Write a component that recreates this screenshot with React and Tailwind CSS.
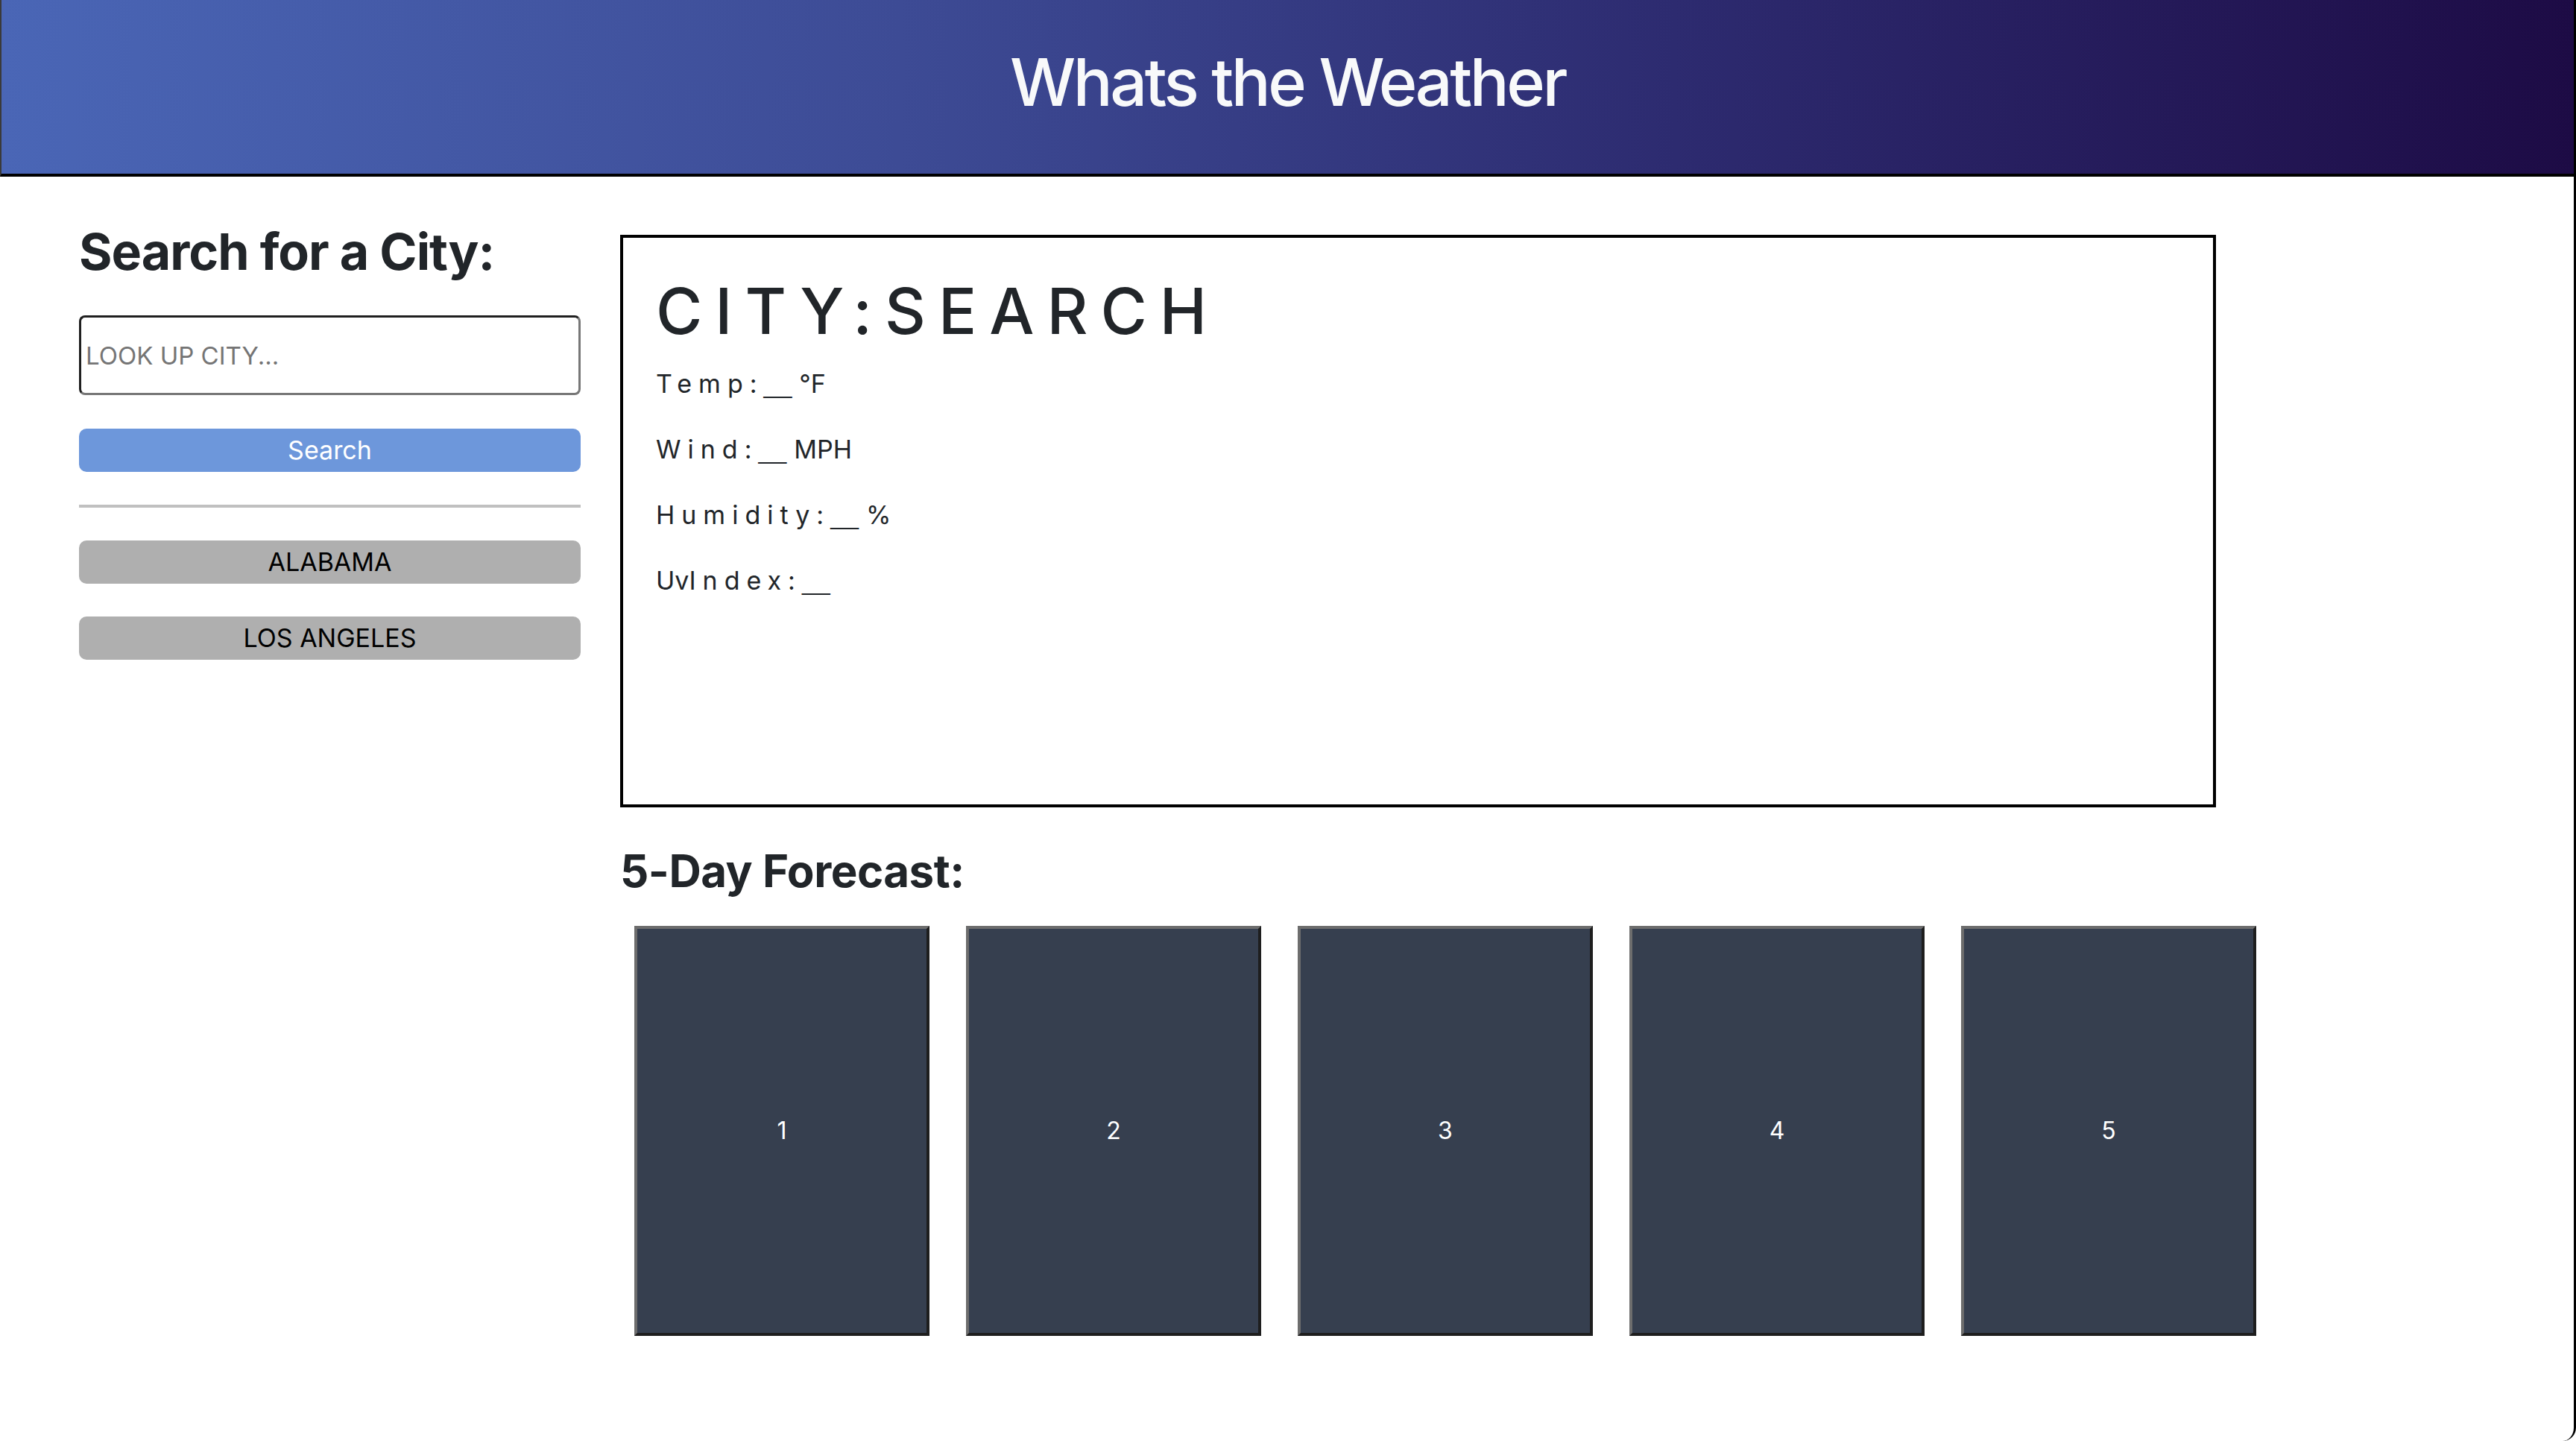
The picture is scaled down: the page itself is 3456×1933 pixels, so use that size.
import React from 'react';

const stats = [
  { label: 'Temp:', value: '__', unit: '°F' },
  { label: 'Wind:', value: '__', unit: 'MPH' },
  { label: 'Humidity:', value: '__', unit: '%' },
  { pre: 'Uv', label: 'Index:', value: '__', unit: '' },
];

const history = ['ALABAMA', 'LOS ANGELES'];

function Header() {
  return (
    <header className="h-[237px] border-b-4 border-l-2 border-b-black border-l-[#3a3a3a] bg-[linear-gradient(90deg,#4a66b6_0%,#3d4b95_35%,#2d2b70_65%,#1d0b45_100%)] flex items-center justify-center pb-[14px]">
      <h1 className="text-[88px] leading-none font-medium text-[#f8f9fa] tracking-[-3.5px]">Whats the Weather</h1>
    </header>
  );
}

function Sidebar() {
  return (
    <aside className="w-[673px] shrink-0 pt-[66px]">
      <h2 className="text-[68px] leading-none font-bold text-[#212529] tracking-[-1px]">Search for a City:</h2>

      <input
        type="text"
        placeholder="LOOK UP CITY..."
        className="mt-[52px] block w-full h-[107px] rounded-[8px] border-[3px] border-t-[#1f1f1f] border-l-[#1f1f1f] border-r-[#777777] border-b-[#777777] pl-[6px] text-[33px] text-[#212529] placeholder:text-[#757575] outline-none"
      />

      <button className="mt-[45px] w-full h-[58px] rounded-[10px] bg-[#6d97db] text-white text-[34px] leading-none">
        Search
      </button>

      <hr className="mt-[44px] border-0 h-[4px] bg-[#c0c0c0]" />

      <div className="mt-[44px] flex flex-col gap-[44px]">
        {history.map((city) => (
          <button key={city} className="w-full h-[58px] rounded-[10px] bg-[#afafaf] text-black text-[34px] leading-none">
            {city}
          </button>
        ))}
      </div>
    </aside>
  );
}

function CurrentWeather() {
  return (
    <section className="w-[2141px] h-[768px] border-4 border-black pt-[56px] pl-[44px]">
      <h1 className="text-[85px] leading-none font-medium text-[#212529] tracking-[17px]">CITY:SEARCH</h1>
      <div className="mt-[31px] flex flex-col gap-[40px]">
        {stats.map((s) => (
          <p key={s.label} className="text-[34px] leading-[48px] text-[#212529]">
            {s.pre}
            <span className="tracking-[9px]">{s.label}</span>
            <span className="font-['Liberation_Sans',sans-serif]">{s.value}</span>
            {s.unit && <span className="ml-[10px]">{s.unit}</span>}
          </p>
        ))}
      </div>
    </section>
  );
}

function Forecast() {
  return (
    <section className="mt-[55px]">
      <h3 className="text-[60px] leading-none font-bold text-[#212529] tracking-[-0.5px]">5-Day Forecast:</h3>
      <div className="mt-[44px] pl-[19px] flex gap-[49px]">
        {[1, 2, 3, 4, 5].map((n) => (
          <div
            key={n}
            className="w-[396px] h-[550px] border-4 border-t-[#6d6d6d] border-l-[#6d6d6d] border-r-[#1e1e1e] border-b-[#1e1e1e] bg-[#363f4f] flex items-center justify-center text-white text-[32px]"
          >
            {n}
          </div>
        ))}
      </div>
    </section>
  );
}

export default function App() {
  return (
    <div className="w-full min-h-[1933px] bg-white border-r-[3px] border-black rounded-br-[18px] overflow-hidden font-['Inter','Liberation_Sans',sans-serif]">
      <Header />
      <main className="flex gap-[53px] pl-[106px]">
        <Sidebar />
        <div className="pt-[78px]">
          <CurrentWeather />
          <Forecast />
        </div>
      </main>
    </div>
  );
}
